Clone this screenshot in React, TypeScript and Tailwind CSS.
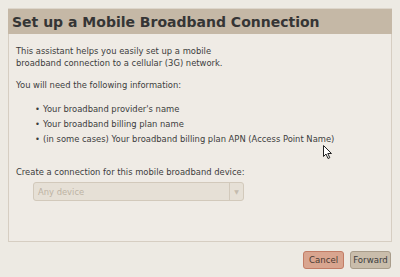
import React from 'react';

const items = [
  "Your broadband provider's name",
  'Your broadband billing plan name',
  '(in some cases) Your broadband billing plan APN (Access Point Name)',
];

const App = () => {
  return (
    <div
      className="relative w-[400px] h-[277px] bg-[#edeae3] text-[#3c3c3c] overflow-hidden"
      style={{ fontFamily: '"DejaVu Sans", sans-serif' }}
    >
      <div className="flex flex-col pt-[8px] px-[8px]">
        {/* Header */}
        <div className="h-[26px] bg-[#c5b8a6] border-t border-[#ddd6cb] flex items-center pl-[4px]">
          <h1 className="text-[14px] font-bold text-[#353535] leading-none">Set up a Mobile Broadband Connection</h1>
        </div>

        {/* Content panel */}
        <div className="h-[208px] border border-t-0 border-[#d6cec2] bg-[#efebe5] pl-[7px] pt-[11px] text-[8.4px] leading-[12px]">
          <p>
            This assistant helps you easily set up a mobile
            <br />
            broadband connection to a cellular (3G) network.
          </p>
          <p className="mt-[10px]">You will need the following information:</p>
          <ul className="mt-[12px] pl-[19px] flex flex-col gap-[3px]">
            {items.map((t) => (
              <li key={t} className="flex gap-[3px] leading-[12px]">
                <span>•</span>
                <span>{t}</span>
              </li>
            ))}
          </ul>
          <p className="mt-[21px]">Create a connection for this mobile broadband device:</p>
          <div className="mt-[4px] ml-[17px] w-[211px] h-[19px] rounded-[3px] border border-[#d2c9bb] bg-[#e6e0d6] flex items-stretch">
            <span className="flex-1 pl-[4px] flex items-center text-[#bdb3a4]">Any device</span>
            <span className="w-[14px] border-l border-[#d2c9bb] flex items-center justify-center text-[6px] text-[#c4bbad]">▼</span>
          </div>
        </div>

        {/* Buttons */}
        <div className="flex justify-end gap-[6px] mt-[9px] pr-[1px]">
          <button className="w-[41px] h-[18px] rounded-[3px] border border-[#c27d66] bg-[#d9a58f] text-[8.6px] text-[#4a3a32] leading-none">
            Cancel
          </button>
          <button className="w-[41px] h-[18px] rounded-[3px] border border-[#a99d8b] bg-[#c9bdab] text-[8.6px] text-[#3c3c3c] leading-none">
            Forward
          </button>
        </div>
      </div>

      {/* Mouse pointer */}
      <svg className="absolute left-[323px] top-[145px]" width="10" height="15" viewBox="0 0 10 15">
        <path d="M0.5 0.5 L0.5 11.5 L3 9 L5 13.5 L6.8 12.7 L4.8 8.5 L8.5 8.5 Z" fill="#fff" stroke="#222" strokeWidth="1" />
      </svg>
    </div>
  );
};

export default App;
